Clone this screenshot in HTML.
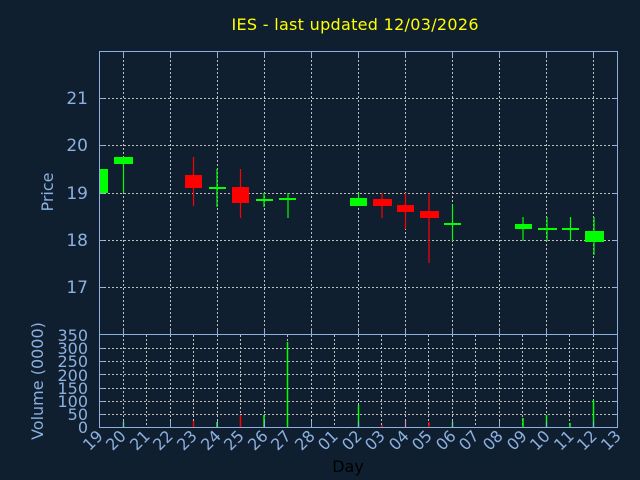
<!DOCTYPE html>
<html><head><meta charset="utf-8"><style>
html,body{margin:0;padding:0;background:#0f1f30;}
svg{display:block;font-family:"DejaVu Sans","Liberation Sans",sans-serif;}
</style></head><body>
<svg width="640" height="480" viewBox="0 0 640 480">
<rect width="640" height="480" fill="#0f1f30"/>
<text x="355" y="30" fill="#ffff00" font-size="16" text-anchor="middle" textLength="247">IES - last updated 12/03/2026</text>
<g stroke="#c0c0c0" stroke-dasharray="2,2" stroke-width="1">
<line x1="100" y1="98.5" x2="617" y2="98.5"/><line x1="100" y1="145.5" x2="617" y2="145.5"/>
<line x1="100" y1="193.5" x2="617" y2="193.5"/><line x1="100" y1="240.5" x2="617" y2="240.5"/>
<line x1="100" y1="287.5" x2="617" y2="287.5"/>
<line x1="123.5" y1="52" x2="123.5" y2="334"/><line x1="170.5" y1="52" x2="170.5" y2="334"/>
<line x1="217.5" y1="52" x2="217.5" y2="334"/><line x1="264.5" y1="52" x2="264.5" y2="334"/>
<line x1="311.5" y1="52" x2="311.5" y2="334"/><line x1="358.5" y1="52" x2="358.5" y2="334"/>
<line x1="405.5" y1="52" x2="405.5" y2="334"/><line x1="452.5" y1="52" x2="452.5" y2="334"/>
<line x1="499.5" y1="52" x2="499.5" y2="334"/><line x1="546.5" y1="52" x2="546.5" y2="334"/>
<line x1="593.5" y1="52" x2="593.5" y2="334"/>
<line x1="100" y1="348.5" x2="617" y2="348.5"/><line x1="100" y1="361.5" x2="617" y2="361.5"/>
<line x1="100" y1="374.5" x2="617" y2="374.5"/><line x1="100" y1="388.5" x2="617" y2="388.5"/>
<line x1="100" y1="401.5" x2="617" y2="401.5"/><line x1="100" y1="414.5" x2="617" y2="414.5"/>
<line x1="123.5" y1="335" x2="123.5" y2="427"/><line x1="146.5" y1="335" x2="146.5" y2="427"/>
<line x1="170.5" y1="335" x2="170.5" y2="427"/><line x1="193.5" y1="335" x2="193.5" y2="427"/>
<line x1="217.5" y1="335" x2="217.5" y2="427"/><line x1="240.5" y1="335" x2="240.5" y2="427"/>
<line x1="264.5" y1="335" x2="264.5" y2="427"/><line x1="287.5" y1="335" x2="287.5" y2="427"/>
<line x1="311.5" y1="335" x2="311.5" y2="427"/><line x1="334.5" y1="335" x2="334.5" y2="427"/>
<line x1="358.5" y1="335" x2="358.5" y2="427"/><line x1="381.5" y1="335" x2="381.5" y2="427"/>
<line x1="405.5" y1="335" x2="405.5" y2="427"/><line x1="428.5" y1="335" x2="428.5" y2="427"/>
<line x1="452.5" y1="335" x2="452.5" y2="427"/><line x1="475.5" y1="335" x2="475.5" y2="427"/>
<line x1="499.5" y1="335" x2="499.5" y2="427"/><line x1="522.5" y1="335" x2="522.5" y2="427"/>
<line x1="546.5" y1="335" x2="546.5" y2="427"/><line x1="569.5" y1="335" x2="569.5" y2="427"/>
<line x1="593.5" y1="335" x2="593.5" y2="427"/>
</g>
<g stroke-width="1.2">
<rect x="100" y="169" width="8" height="24" fill="#00ff00"/>
<line x1="123.5" y1="157" x2="123.5" y2="193" stroke="#00ff00"/><rect x="114" y="157" width="19" height="7" fill="#00ff00"/>
<line x1="193.5" y1="157" x2="193.5" y2="206" stroke="#ff0000"/><rect x="185" y="175" width="17" height="13" fill="#ff0000"/>
<line x1="217" y1="169" x2="217" y2="207" stroke="#00ff00"/><rect x="209" y="187" width="17" height="2" fill="#00ff00"/>
<line x1="240.5" y1="169" x2="240.5" y2="218" stroke="#ff0000"/><rect x="232" y="187" width="17" height="16" fill="#ff0000"/>
<line x1="264" y1="193" x2="264" y2="207" stroke="#00ff00"/><rect x="256" y="199" width="17" height="2" fill="#00ff00"/>
<line x1="288" y1="193" x2="288" y2="218" stroke="#00ff00"/><rect x="279" y="198" width="17" height="2" fill="#00ff00"/>
<line x1="358.5" y1="193" x2="358.5" y2="206" stroke="#00ff00"/><rect x="350" y="198" width="17" height="8" fill="#00ff00"/>
<line x1="382" y1="193" x2="382" y2="218" stroke="#ff0000"/><rect x="373" y="199" width="19" height="7" fill="#ff0000"/>
<line x1="405.5" y1="193" x2="405.5" y2="229" stroke="#ff0000"/><rect x="397" y="205" width="17" height="7" fill="#ff0000"/>
<line x1="429" y1="193" x2="429" y2="263" stroke="#ff0000"/><rect x="420" y="211" width="19" height="7" fill="#ff0000"/>
<line x1="452.5" y1="205" x2="452.5" y2="241" stroke="#00ff00"/><rect x="444" y="223" width="17" height="2" fill="#00ff00"/>
<line x1="523" y1="217" x2="523" y2="241" stroke="#00ff00"/><rect x="515" y="224" width="17" height="5" fill="#00ff00"/>
<line x1="547" y1="217" x2="547" y2="241" stroke="#00ff00"/><rect x="538" y="228" width="19" height="2" fill="#00ff00"/>
<line x1="570.5" y1="217" x2="570.5" y2="241" stroke="#00ff00"/><rect x="562" y="228" width="17" height="2" fill="#00ff00"/>
<line x1="594" y1="217" x2="594" y2="255" stroke="#00ff00"/><rect x="585" y="231" width="19" height="11" fill="#00ff00"/>
</g>
<g stroke-width="1.5">
<line x1="123.5" y1="422" x2="123.5" y2="427" stroke="#00ff00"/>
<line x1="193.5" y1="421" x2="193.5" y2="427" stroke="#ff0000"/>
<line x1="217" y1="422" x2="217" y2="427" stroke="#00ff00"/>
<line x1="240.5" y1="415" x2="240.5" y2="427" stroke="#ff0000"/>
<line x1="264" y1="415" x2="264" y2="427" stroke="#00ff00"/>
<line x1="287.5" y1="342" x2="287.5" y2="427" stroke="#00ff00"/>
<line x1="358.5" y1="405" x2="358.5" y2="427" stroke="#00ff00"/>
<line x1="382" y1="425" x2="382" y2="427" stroke="#ff0000"/>
<line x1="405.5" y1="421" x2="405.5" y2="427" stroke="#ff0000"/>
<line x1="429" y1="422" x2="429" y2="427" stroke="#ff0000"/>
<line x1="452.5" y1="422" x2="452.5" y2="427" stroke="#00ff00"/>
<line x1="523" y1="418" x2="523" y2="427" stroke="#00ff00"/>
<line x1="546.5" y1="415" x2="546.5" y2="427" stroke="#00ff00"/>
<line x1="570" y1="423" x2="570" y2="427" stroke="#00ff00"/>
<line x1="593.5" y1="400" x2="593.5" y2="427" stroke="#00ff00"/>
</g>
<g stroke="#8cb0e0" fill="none" stroke-width="1">
<rect x="99.5" y="51.5" width="518" height="283"/>
<rect x="99.5" y="334.5" width="518" height="93"/>
<path d="M99 98.5h5M99 145.5h5M99 193.5h5M99 240.5h5M99 287.5h5M613 98.5h5M613 145.5h5M613 193.5h5M613 240.5h5M613 287.5h5"/>
<path d="M99 348.5h5M99 361.5h5M99 374.5h5M99 388.5h5M99 401.5h5M99 414.5h5M613 348.5h5M613 361.5h5M613 374.5h5M613 388.5h5M613 401.5h5M613 414.5h5"/>
<path d="M123.5 52v5M170.5 52v5M217.5 52v5M264.5 52v5M311.5 52v5M358.5 52v5M405.5 52v5M452.5 52v5M499.5 52v5M546.5 52v5M593.5 52v5"/>
<path d="M123.5 334v-6M170.5 334v-6M217.5 334v-6M264.5 334v-6M311.5 334v-6M358.5 334v-6M405.5 334v-6M452.5 334v-6M499.5 334v-6M546.5 334v-6M593.5 334v-6"/>
<path d="M123.5 427v-6M170.5 427v-6M217.5 427v-6M264.5 427v-6M311.5 427v-6M358.5 427v-6M405.5 427v-6M452.5 427v-6M499.5 427v-6M546.5 427v-6M593.5 427v-6"/>
</g>
<g fill="#8cb0e0" font-size="17" text-anchor="end">
<text x="88" y="104">21</text><text x="88" y="151">20</text><text x="88" y="199">19</text>
<text x="88" y="246">18</text><text x="88" y="293">17</text>
</g>
<g fill="#8cb0e0" font-size="16" text-anchor="end">
<text x="88" y="341">350</text><text x="88" y="354">300</text><text x="88" y="367">250</text>
<text x="88" y="381">200</text><text x="88" y="394">150</text><text x="88" y="407">100</text>
<text x="88" y="420">50</text><text x="88" y="433">0</text>
</g>
<text transform="translate(53,192) rotate(-90)" fill="#8cb0e0" font-size="16" text-anchor="middle">Price</text>
<text transform="translate(43,381) rotate(-90)" fill="#8cb0e0" font-size="16" text-anchor="middle">Volume (0000)</text>
<g fill="#8cb0e0" font-size="16" text-anchor="end">
<text transform="translate(104,437) rotate(-45)">19</text>
<text transform="translate(127,437) rotate(-45)">20</text>
<text transform="translate(151,437) rotate(-45)">21</text>
<text transform="translate(174,437) rotate(-45)">22</text>
<text transform="translate(198,437) rotate(-45)">23</text>
<text transform="translate(222,437) rotate(-45)">24</text>
<text transform="translate(245,437) rotate(-45)">25</text>
<text transform="translate(269,437) rotate(-45)">26</text>
<text transform="translate(292,437) rotate(-45)">27</text>
<text transform="translate(316,437) rotate(-45)">28</text>
<text transform="translate(339,437) rotate(-45)">01</text>
<text transform="translate(363,437) rotate(-45)">02</text>
<text transform="translate(386,437) rotate(-45)">03</text>
<text transform="translate(410,437) rotate(-45)">04</text>
<text transform="translate(433,437) rotate(-45)">05</text>
<text transform="translate(457,437) rotate(-45)">06</text>
<text transform="translate(480,437) rotate(-45)">07</text>
<text transform="translate(504,437) rotate(-45)">08</text>
<text transform="translate(528,437) rotate(-45)">09</text>
<text transform="translate(551,437) rotate(-45)">10</text>
<text transform="translate(575,437) rotate(-45)">11</text>
<text transform="translate(598,437) rotate(-45)">12</text>
<text transform="translate(622,437) rotate(-45)">13</text>
</g>
<text x="348" y="472" fill="#000000" font-size="16" text-anchor="middle">Day</text>
</svg>
</body></html>
